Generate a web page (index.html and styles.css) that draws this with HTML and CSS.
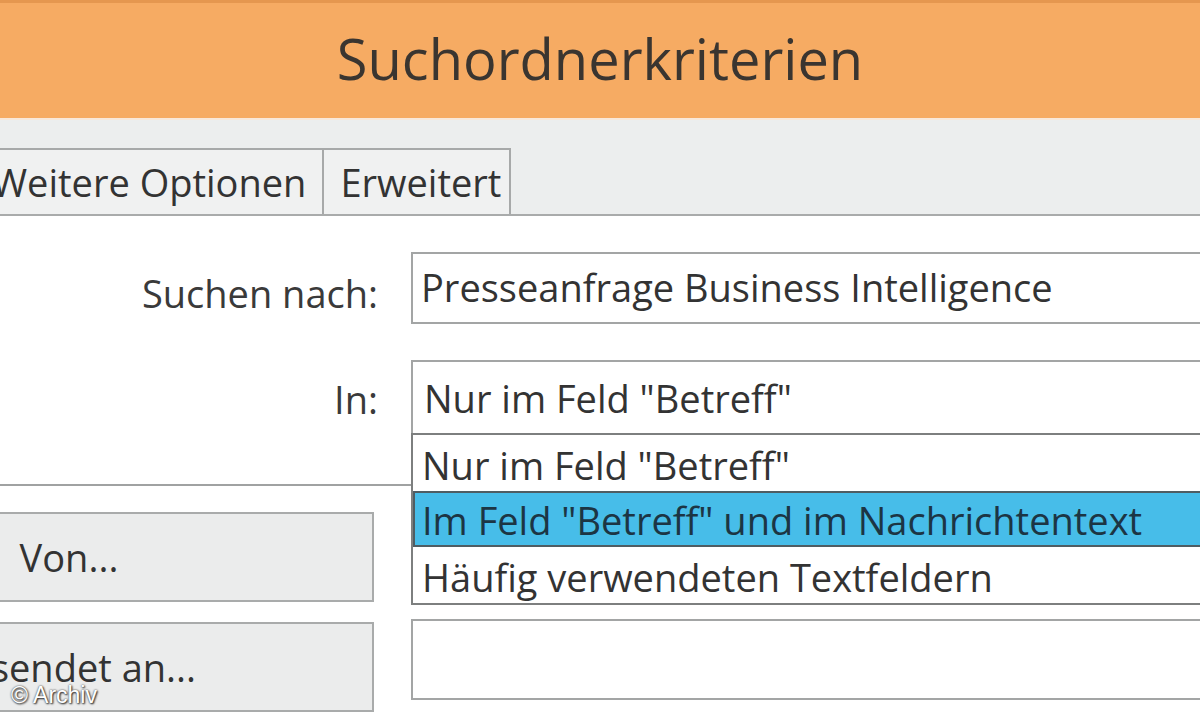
FILE: index.html
```html
<!DOCTYPE html>
<html lang="de">
  <head>
    <meta charset="UTF-8" />
    <meta name="viewport" content="width=device-width, initial-scale=1.0" />
    <title>Suchordnerkriterien</title>
    <link rel="stylesheet" href="styles.css">
  </head>

  <body>
    <div class="dialog">
      <!-- Title bar -->
      <header class="titlebar">
        <h1>Suchordnerkriterien</h1>
      </header>

      <!-- Tabs -->
      <div class="tabstrip">
        <div class="tab first">Weitere Optionen</div>
        <div class="tab">Erweitert</div>
      </div>

      <!-- Search criteria -->
      <main class="panel">
        <div class="row">
          <label class="label">Suchen nach:</label>
          <div class="field">Presseanfrage Business Intelligence</div>
        </div>

        <div class="row row-in">
          <label class="label label-in">In:</label>
          <div class="combo">
            <div class="field select">Nur im Feld "Betreff"</div>
            <ul class="droplist">
              <li>Nur im Feld "Betreff"</li>
              <li class="selected">Im Feld "Betreff" und im Nachrichtentext</li>
              <li>Häufig verwendeten Textfeldern</li>
            </ul>
          </div>
        </div>

        <hr class="divider" />

        <div class="row row-btn">
          <button class="btn">Von...</button>
          <div class="field field-low"></div>
        </div>

        <div class="row row-btn second">
          <button class="btn">Gesendet an...</button>
          <div class="field field-low"></div>
        </div>
      </main>

      <div class="credit">© Archiv</div>
    </div>
  </body>
</html>
```

FILE: styles.css
```css
/* Page */
body {
  margin: 0;
  padding: 0;
  background-color: #ffffff;
  font-family: "Open Sans", "Noto Sans", sans-serif;
  color: #333333;
  overflow: hidden;
}

.dialog {
  position: relative;
  width: 1200px;
  height: 720px;
  overflow: hidden;
}

/* Title bar */
.titlebar {
  height: 115px;
  background-color: #f6ab63;
  border-top: 3px solid #e5974f;
  border-bottom: 2px solid #f8e8da;
  display: flex;
  align-items: center;
  justify-content: center;
}

.titlebar h1 {
  margin: 0;
  font-weight: normal;
  font-size: 56px;
  color: #3a3530;
  padding-bottom: 6px;
}

/* Tab strip */
.tabstrip {
  height: 94px;
  background-color: #eceeee;
  border-bottom: 2px solid #a9abab;
  display: flex;
  align-items: flex-end;
}

.tab {
  height: 66px;
  box-sizing: border-box;
  background-color: #f0f1f1;
  border: 2px solid #a7a9a9;
  border-bottom: none;
  padding: 0 8px 0 16px;
  font-size: 38px;
  line-height: 64px;
  color: #333333;
  white-space: nowrap;
}

.tab.first {
  margin-left: -26px;
  border-right: none;
  padding-right: 16px;
}

/* Form panel */
.panel {
  width: 1240px;
  padding-top: 36px;
}

.row {
  display: grid;
  grid-template-columns: 378px 1fr;
  column-gap: 33px;
  align-items: center;
}

.row-in {
  margin-top: 36px;
}

.label {
  text-align: right;
  font-size: 38px;
  color: #3a3a3a;
  padding-top: 10px;
}

.label-in {
  padding-top: 2px;
}

.field {
  height: 72px;
  box-sizing: border-box;
  border: 2px solid #a3a5a5;
  background-color: #ffffff;
  padding-left: 8px;
  font-size: 38px;
  line-height: 66px;
  white-space: nowrap;
  color: #333333;
}

.select {
  height: 75px;
  padding-left: 11px;
  line-height: 72px;
}

/* Open dropdown */
.combo {
  position: relative;
}

.droplist {
  position: absolute;
  top: 73px;
  left: 0;
  right: 0;
  margin: 0;
  padding: 0;
  list-style: none;
  background-color: #ffffff;
  border: 2px solid #7d7f7f;
  z-index: 2;
}

.droplist li {
  height: 56px;
  box-sizing: border-box;
  padding: 5px 0 0 9px;
  font-size: 38px;
  line-height: 50px;
  white-space: nowrap;
  color: #333333;
}

.droplist li.selected {
  background-color: #47bde9;
  border: 2px solid #4f5d63;
  border-right: none;
  padding: 3px 0 0 7px;
  line-height: 48px;
  color: #1c3544;
}

/* Divider line */
.divider {
  margin: 49px 0 0 0;
  border: none;
  border-top: 2px solid #a0a2a2;
}

/* Button rows */
.row-btn {
  margin-top: 26px;
  align-items: start;
}

.row-btn.second {
  margin-top: 20px;
}

.btn {
  margin-left: -236px;
  margin-right: 4px;
  height: 90px;
  background-color: #ebecec;
  border: 2px solid #a9abab;
  font-family: "Open Sans", "Noto Sans", sans-serif;
  font-size: 38px;
  color: #333333;
  padding: 0;
}

.field-low {
  height: 81px;
  margin-top: -3px;
}

/* Watermark */
.credit {
  position: absolute;
  left: 11px;
  bottom: 11px;
  font-family: "Liberation Sans", Arial, sans-serif;
  font-size: 23px;
  color: #ffffff;
  text-shadow: 0 0 2px #333333, 1px 1px 2px #222222;
  z-index: 3;
}
```
